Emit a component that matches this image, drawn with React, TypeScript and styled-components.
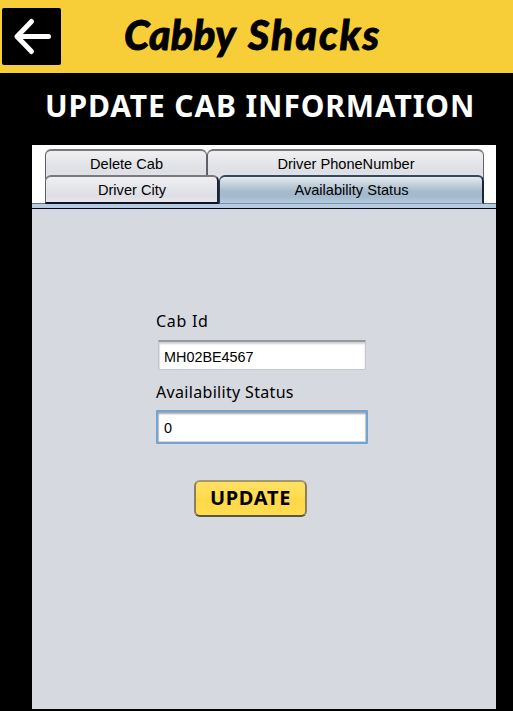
import React, { useState } from "react";
import styled, { createGlobalStyle } from "styled-components";

const GlobalStyle = createGlobalStyle`
  * { box-sizing: border-box; }
  body { margin: 0; background: #000; overflow: hidden; }
`;

const Screen = styled.main`
  width: 513px;
  height: 711px;
  display: flex;
  flex-direction: column;
  background: #000;
  color: #000;
`;

const Header = styled.header`
  height: 73px;
  flex: none;
  display: flex;
  align-items: flex-start;
  padding: 8px 0 0 2px;
  background: #f8ce38;
`;

const BackButton = styled.button`
  width: 59px;
  height: 57px;
  padding: 0;
  border: 0;
  border-radius: 2px;
  background: #000;
  svg { display: block; }
`;

const Brand = styled.div`
  display: flex;
  margin: 3px 0 0 63px;
  font: italic 900 41px/48px Lato, sans-serif;
  white-space: nowrap;
`;

const BrandWord = styled.span<{ $width: number; $spacing: number }>`
  width: ${(p) => p.$width}px;
  letter-spacing: ${(p) => p.$spacing}px;
  -webkit-text-stroke: 0.8px #000;
`;

const Title = styled.h1`
  height: 72px;
  flex: none;
  margin: 0;
  padding: 12px 0 0 45px;
  color: #fff;
  font: bold 30px/42px "Noto Sans", sans-serif;
  letter-spacing: 0.87px;
  white-space: nowrap;
`;

const Panel = styled.section`
  width: 464px;
  height: 564px;
  margin-left: 32px;
  display: flex;
  flex-direction: column;
  background: #d6d9e0;
`;

const TabArea = styled.div`
  height: 59px;
  flex: none;
  padding: 4px 12px 0 13px;
  background: #fff;
  border-bottom: 1px solid #6b7182;
`;

const TabRow = styled.div<{ $columns: string; $height: number }>`
  display: grid;
  grid-template-columns: ${(p) => p.$columns};
  height: ${(p) => p.$height}px;
`;

const Tab = styled.button<{ $active?: boolean; $front?: boolean }>`
  height: ${(p) => (p.$front ? 29 : 30)}px;
  padding: 0 0 ${(p) => (p.$front ? 0 : 2)}px 1px;
  border: 1px solid ${(p) => (p.$active ? "#24384e" : "#5c5f69")};
  border-top-width: 2px;
  border-top-color: ${(p) => (p.$active ? "#34495e" : "#77797f")};
  border-right: ${(p) => (p.$front ? "2px solid #1c2436" : "1px solid #62656f")};
  border-bottom: ${(p) =>
    p.$active ? "1px solid #7d93aa" : p.$front ? "2px solid #111322" : "0"};
  border-radius: 6px 6px 0 0;
  background: ${(p) =>
    p.$active
      ? "linear-gradient(#e4ebf0, #c2d0da 30%, #a7bbcc 55%, #a3b9cd 75%, #b4cadc)"
      : "linear-gradient(#f0f0f2, #e4e5e9 45%, #dedfe4 75%, #e6e7ed)"};
  color: #000;
  font: 14.6px/24px "Liberation Sans", Arial, sans-serif;
`;

const ContentEdge = styled.div`
  height: 5px;
  flex: none;
  background: #b6cbe2;
  border-bottom: 1px solid #080a20;
`;

const Form = styled.form`
  display: flex;
  flex-direction: column;
  align-items: flex-start;
  padding: 100px 0 0 124px;
`;

const Label = styled.label<{ $spacing: number }>`
  height: 24px;
  font: 16px/24px "Noto Sans", sans-serif;
  letter-spacing: ${(p) => p.$spacing}px;
`;

const TextInput = styled.input<{ $highlighted?: boolean }>`
  width: ${(p) => (p.$highlighted ? 212 : 208)}px;
  height: ${(p) => (p.$highlighted ? 34 : 30)}px;
  margin: ${(p) => (p.$highlighted ? "6px 0 0" : "7px 0 10px 2px")};
  padding: ${(p) => (p.$highlighted ? "2px 6px 0" : "2px 5px 0")};
  outline: 0;
  border: ${(p) => (p.$highlighted ? "2px solid #73a4d1" : "1px solid #c5c7cd")};
  ${(p) => !p.$highlighted && "border-top: 2px solid #9799a0;"}
  border-radius: 1px;
  background: #fff;
  box-shadow: ${(p) =>
    p.$highlighted
      ? "inset 0 2px 2px #a5a5a8, inset 1px 0 1px #c8c8ca, inset -1px -1px 0 #d5d8de"
      : "inset 0 2px 2px #d0d0d2, inset 1px 0 1px #e5e5e6"};
  color: #000;
  font: 14.4px/20px "Liberation Sans", Arial, sans-serif;
`;

const UpdateButton = styled.button`
  width: 113px;
  height: 37px;
  margin: 36px 0 0 38px;
  padding: 0 0 2px;
  border: 2px solid;
  border-color: #a29869 #8b805a #59553f #8b805a;
  border-radius: 6px;
  background: linear-gradient(#ffe066, #ffdc4e 45%, #ffd747 50%, #ffdd50);
  color: #000;
  font: bold 20px/30px "Noto Sans", sans-serif;
  letter-spacing: 0.7px;
`;

function BackArrow() {
  return (
    <svg width="59" height="57" viewBox="0 0 59 57" fill="none">
      <path d="M29.5 13.5 15 28.5l14.5 15M15.5 28.5H46.5" stroke="#fff" strokeWidth="5" strokeLinecap="round" strokeLinejoin="round" />
    </svg>
  );
}

export default function App() {
  const [cabId, setCabId] = useState("MH02BE4567");
  const [status, setStatus] = useState("0");

  return (
    <Screen>
      <GlobalStyle />
      <Header>
        <BackButton aria-label="Back"><BackArrow /></BackButton>
        <Brand>
          <BrandWord $width={124} $spacing={0.2}>Cabby</BrandWord>
          <BrandWord $width={135} $spacing={2}>Shacks</BrandWord>
        </Brand>
      </Header>
      <Title>UPDATE CAB INFORMATION</Title>
      <Panel>
        <TabArea>
          <TabRow $columns="162px 277px" $height={26}>
            <Tab>Delete Cab</Tab>
            <Tab>Driver PhoneNumber</Tab>
          </TabRow>
          <TabRow $columns="174px 265px" $height={29}>
            <Tab $front>Driver City</Tab>
            <Tab $front $active>Availability Status</Tab>
          </TabRow>
        </TabArea>
        <ContentEdge />
        <Form onSubmit={(e) => e.preventDefault()}>
          <Label htmlFor="cab-id" $spacing={0.7}>Cab Id</Label>
          <TextInput id="cab-id" value={cabId} onChange={(e) => setCabId(e.target.value)} />
          <Label htmlFor="status" $spacing={0.32}>Availability Status</Label>
          <TextInput id="status" $highlighted value={status} onChange={(e) => setStatus(e.target.value)} />
          <UpdateButton type="submit">UPDATE</UpdateButton>
        </Form>
      </Panel>
    </Screen>
  );
}
